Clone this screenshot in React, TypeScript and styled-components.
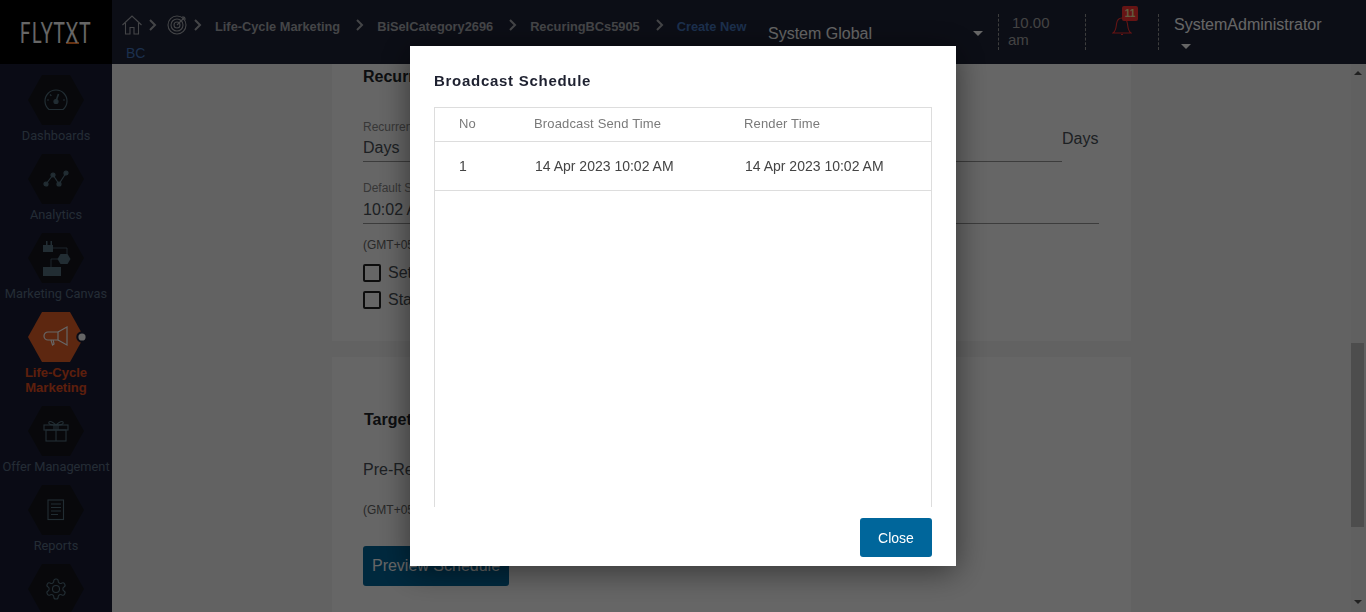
import { FC, ReactNode } from "react";
import styled, { createGlobalStyle } from "styled-components";

const GlobalStyle = createGlobalStyle`
  html, body {
    margin: 0;
    height: 100%;
    overflow: hidden;
    font-family: "Liberation Sans", Arial, sans-serif;
    color: #495057;
  }
  * { box-sizing: border-box; }
`;

const Page = styled.div`
  width: 1366px;
  height: 612px;
  display: flex;
  flex-direction: column;
  overflow: hidden;
  background: #f5f5f5;
`;

const Header = styled.header`
  height: 64px;
  flex: none;
  display: flex;
  background: #1e2337;
`;

const LogoBox = styled.div`
  width: 112px;
  flex: none;
  background: #000;
  display: flex;
  align-items: center;
  justify-content: center;
  padding-bottom: 1px;
`;

const LogoText = styled.span`
  font-family: Lato, sans-serif;
  font-weight: 400;
  font-size: 28px;
  letter-spacing: 1.5px;
  line-height: 26px;
  color: #fff;
  white-space: nowrap;
  transform: scaleX(0.68);
`;

const LogoX = styled.span`
  border-bottom: 2px solid #ff7a2a;
  display: inline-block;
  line-height: 19px;
  height: 21px;
`;

const Crumbs = styled.nav`
  width: 656px;
  flex: none;
  padding: 13px 0 0 14px;
  text-indent: -4px;
  font-size: 14px;
  line-height: 27px;
  color: #aaacb2;
`;

const CrumbIcon = styled.svg`
  display: inline-block;
  vertical-align: middle;
  fill: none;
  stroke: currentColor;
  margin-top: -4px;
`;

const Crumb = styled.span`
  font-weight: 700;
  font-size: 12.8px;
  margin-right: 15px;
`;

const CrumbCurrent = styled.span`
  font-size: 14px;
  color: #4577c0;
`;

const Strong = styled.b`
  font-weight: 700;
  font-size: 12.8px;
`;

const Arrow: FC<{ before?: number; after: number }> = ({ before = 0, after }) => (
  <CrumbIcon width="10" height="14" viewBox="0 0 10 14" strokeWidth="2" style={{ marginLeft: before, marginRight: after }}>
    <path d="M2 2l5 5-5 5" />
  </CrumbIcon>
);

const Scope = styled.div`
  width: 230px;
  flex: none;
  display: flex;
  justify-content: space-between;
  align-items: center;
  padding: 3px 15px 0 0;
  font-size: 16px;
  color: #fff;
`;

const Caret = styled.span`
  width: 0;
  height: 0;
  display: block;
  border-left: 5px solid transparent;
  border-right: 5px solid transparent;
  border-top: 5px solid #fff;
`;

const HeaderCell = styled.div<{ $width: number }>`
  width: ${(p) => p.$width}px;
  flex: none;
  height: 36px;
  margin-top: 14px;
  border-left: 1px dashed #9a9a9a;
  position: relative;
`;

const Clock = styled.div`
  font-size: 15px;
  line-height: 17px;
  color: #a8a8a8;
  padding: 0 0 0 9px;
  width: 60px;
  text-indent: 4px;
  word-spacing: 10px;
`;

const Badge = styled.span`
  position: absolute;
  left: 36px;
  top: -8px;
  width: 16px;
  height: 15px;
  border-radius: 2px;
  background: #ff3333;
  color: #f5e6a0;
  font-size: 10px;
  font-weight: 700;
  line-height: 15px;
  text-align: center;
`;

const BellIcon = styled.svg`
  position: absolute;
  left: 26px;
  top: 2px;
  fill: none;
  stroke: #ff3333;
`;

const UserName = styled.div`
  padding: 0 0 0 15px;
  margin-top: 1px;
  font-size: 16px;
  line-height: 20px;
  color: #fff;
`;

const UserCaret = styled(Caret)`
  margin: 9px 0 0 22px;
`;

const Body = styled.div`
  flex: 1;
  min-height: 0;
  display: flex;
`;

const Sidebar = styled.aside`
  width: 112px;
  flex: none;
  background: #1a1d35;
  padding-top: 11px;
  display: flex;
  flex-direction: column;
  gap: 11px;
  overflow: hidden;
`;

const NavItem = styled.div`
  display: flex;
  flex-direction: column;
  align-items: center;
  flex: none;
`;

const Hex = styled.div`
  position: relative;
  width: 56px;
  height: 50px;
  flex: none;
`;

const HexFill = styled.div<{ $active?: boolean }>`
  width: 100%;
  height: 100%;
  display: flex;
  align-items: center;
  justify-content: center;
  clip-path: polygon(25% 0, 75% 0, 100% 50%, 75% 100%, 25% 100%, 0 50%);
  background: ${(p) => (p.$active ? "#e8622a" : "#14161d")};
  color: ${(p) => (p.$active ? "#fff" : "#557080")};
`;

const ActiveDot = styled.span`
  position: absolute;
  right: -3px;
  top: 20px;
  width: 10px;
  height: 10px;
  border-radius: 50%;
  background: #fff;
  box-shadow: 0 0 0 3px #1a1d35;
  transform: scale(0.72);
`;

const NavLabel = styled.div<{ $active?: boolean }>`
  margin-top: 3px;
  font-family: ${(p) => (p.$active ? '"Liberation Sans", Arial, sans-serif' : "Roboto, sans-serif")};
  font-size: ${(p) => (p.$active ? 13 : 12.8)}px;
  line-height: 15px;
  text-align: center;
  white-space: nowrap;
  color: ${(p) => (p.$active ? "#e84f20" : "#5a6f85")};
  font-weight: ${(p) => (p.$active ? 700 : 400)};
`;

const Main = styled.main`
  flex: 1;
  min-width: 0;
  overflow: hidden;
  padding-left: 220px;
  display: flex;
  flex-direction: column;
  gap: 16px;
`;

const Card = styled.section<{ $height: number }>`
  width: 799px;
  height: ${(p) => p.$height}px;
  flex: none;
  background: #fff;
  padding-left: 31px;
`;

const CardTitle = styled.h3<{ $top: number; $left?: number }>`
  margin: ${(p) => p.$top}px 0 0 ${(p) => p.$left ?? 0}px;
  font-size: 16px;
  line-height: 18px;
  font-weight: 700;
  color: #212529;
`;

const FieldLabel = styled.div<{ $top: number }>`
  margin-top: ${(p) => p.$top}px;
  font-size: 12px;
  line-height: 14px;
  color: #8a8a8a;
`;

const FieldValue = styled.div<{ $width: number; $height: number }>`
  width: ${(p) => p.$width}px;
  height: ${(p) => p.$height}px;
  padding-top: ${(p) => p.$height - 24}px;
  font-size: 16px;
  line-height: 20px;
  border-bottom: 1px solid #969696;
  position: relative;
`;

const Suffix = styled.span`
  position: absolute;
  left: 100%;
  top: -5px;
`;

const Note = styled.div<{ $top: number }>`
  margin-top: ${(p) => p.$top}px;
  font-size: 12px;
  line-height: 14px;
  color: #666;
`;

const CheckRow = styled.label<{ $top: number }>`
  display: flex;
  align-items: center;
  gap: 7px;
  margin-top: ${(p) => p.$top}px;
  height: 18px;
  font-size: 16px;
`;

const CheckBox = styled.span`
  width: 18px;
  height: 18px;
  border: 2px solid #222;
  border-radius: 2px;
  background: #fff;
`;

const PlainText = styled.div<{ $top: number }>`
  margin-top: ${(p) => p.$top}px;
  font-size: 16px;
  line-height: 20px;
`;

const PreviewButton = styled.button`
  display: block;
  margin-top: 29px;
  width: 146px;
  height: 40px;
  padding: 0;
  border: 0;
  border-radius: 3px;
  background: #00669b;
  color: #fff;
  font: 16px "Liberation Sans", Arial, sans-serif;
`;

const Scrollbar = styled.div`
  width: 15px;
  flex: none;
  background: #f1f1f1;
  display: flex;
  flex-direction: column;
  align-items: flex-start;
  position: fixed;
  right: 0;
  top: 64px;
  bottom: 0;
`;

const ScrollUp = styled.span`
  margin: 7px 0 0 3px;
  border-left: 4px solid transparent;
  border-right: 4px solid transparent;
  border-bottom: 4px solid #505050;
`;

const ScrollThumb = styled.div`
  width: 13px;
  height: 184px;
  margin-top: 268px;
  background: #c1c1c1;
`;

const ScrollDown = styled.span`
  margin: auto 0 8px 3px;
  border-left: 4px solid transparent;
  border-right: 4px solid transparent;
  border-top: 4px solid #505050;
`;

const Overlay = styled.div`
  position: fixed;
  inset: 0;
  background: rgba(0, 0, 0, 0.6);
`;

const Modal = styled.div`
  position: fixed;
  left: 410px;
  top: 46px;
  width: 546px;
  height: 520px;
  background: #fff;
  box-shadow: 0 5px 30px rgba(0, 0, 0, 0.5);
  padding: 26px 24px 0;
  display: flex;
  flex-direction: column;
`;

const ModalTitle = styled.h2`
  margin: 0;
  height: 35px;
  font-size: 15px;
  line-height: 17px;
  font-weight: 700;
  letter-spacing: 0.72px;
  color: #1e2130;
`;

const TableFrame = styled.div`
  height: 400px;
  flex: none;
  border: 1px solid #ddd;
  border-bottom: 0;
`;

const TableRow = styled.div<{ $height: number }>`
  height: ${(p) => p.$height}px;
  display: grid;
  grid-template-columns: 75px 210px 1fr;
  align-items: center;
  padding-left: 24px;
  border-bottom: 1px solid #ddd;
`;

const HeadCell = styled.div`
  font-size: 13px;
  letter-spacing: 0.15px;
  color: #7a7a7a;
  padding-bottom: 3px;
`;

const RowCell = styled.div<{ $shift?: number }>`
  font-size: 14px;
  color: #444;
  padding-left: ${(p) => p.$shift ?? 0}px;
`;

const ModalFooter = styled.div`
  display: flex;
  justify-content: flex-end;
  padding-top: 11px;
`;

const CloseButton = styled.button`
  width: 72px;
  height: 39px;
  padding: 0;
  border: 0;
  border-radius: 3px;
  background: #00669b;
  color: #fff;
  font: 14px "Liberation Sans", Arial, sans-serif;
`;

const GaugeIcon = () => (
  <svg width="24" height="22" viewBox="0 0 24 22" fill="none" stroke="currentColor" strokeWidth="1.2">
    <path d="M5 20.500a11 11 0 1 1 14 0z" />
    <path d="M12 12l2.500-7" strokeWidth="1.6" />
    <circle cx="12" cy="12.500" r="2" fill="currentColor" />
    <path d="M3 11h2M19 11h2M6 5.500l1.400 1.400" />
  </svg>
);

const ChartIcon = () => (
  <svg width="26" height="18" viewBox="0 0 26 18" fill="currentColor" stroke="currentColor" strokeWidth="1.2">
    <path d="M3 14l7-9 6 9 7-11" fill="none" />
    <circle cx="3" cy="14" r="2" />
    <circle cx="10" cy="5" r="2" />
    <circle cx="16" cy="14" r="2" />
    <circle cx="23" cy="3" r="2" />
  </svg>
);

const CanvasIcon = () => (
  <svg width="30" height="36" viewBox="0 0 30 36" fill="currentColor">
    <path d="M2 5h3V1h1.500v4h3V1H11v4h1v7H2z" />
    <path d="M12 8h14v6" fill="none" stroke="currentColor" strokeWidth="0.8" />
    <path d="M21 14h7l3 5-3 5h-7l-3-5z" transform="translate(-1.500 0)" />
    <path d="M18 19H10v8" fill="none" stroke="currentColor" strokeWidth="0.8" />
    <rect x="2" y="27" width="18" height="9" />
  </svg>
);

const MegaphoneIcon = () => (
  <svg width="26" height="22" viewBox="0 0 26 22" fill="none" stroke="currentColor" strokeWidth="1.2">
    <path d="M15 6h-10a4 4 0 0 0 0 8h10z" />
    <path d="M15 6l9-5v18l-9-5" />
    <path d="M8 14l1.500 5 1.500-1-.8-4" />
  </svg>
);

const GiftIcon = () => (
  <svg width="26" height="22" viewBox="0 0 26 22" fill="none" stroke="currentColor" strokeWidth="1.1">
    <rect x="1" y="5" width="24" height="5" />
    <rect x="3" y="10" width="20" height="11" />
    <path d="M13 5v16M11 5v5M15 5v5" />
    <path d="M13 5C8 0 5 1 6 3.500 6.500 5 10 5 13 5zM13 5c5-5 8-4 7-1.500C19.500 5 16 5 13 5z" />
  </svg>
);

const ReportIcon = () => (
  <svg width="18" height="22" viewBox="0 0 18 22" fill="none" stroke="currentColor" strokeWidth="1.1">
    <rect x="1" y="1" width="15.500" height="19.500" />
    <path d="M4 5h10M4 8.500h10M4 12h10M4 15.500h7" />
  </svg>
);

const GearIcon = () => (
  <svg width="24" height="24" viewBox="0 0 24 24" fill="none" stroke="currentColor" strokeWidth="1.1">
    <path d="M12.220 2h-.440a2 2 0 0 0-2 2v.180a2 2 0 0 1-1 1.730l-.430.250a2 2 0 0 1-2 0l-.150-.080a2 2 0 0 0-2.730.730l-.220.380a2 2 0 0 0 .730 2.730l.150.100a2 2 0 0 1 1 1.720v.510a2 2 0 0 1-1 1.740l-.150.090a2 2 0 0 0-.730 2.730l.220.380a2 2 0 0 0 2.730.730l.150-.080a2 2 0 0 1 2 0l.430.250a2 2 0 0 1 1 1.730V20a2 2 0 0 0 2 2h.440a2 2 0 0 0 2-2v-.180a2 2 0 0 1 1-1.730l.430-.250a2 2 0 0 1 2 0l.150.080a2 2 0 0 0 2.730-.730l.220-.390a2 2 0 0 0-.730-2.730l-.150-.080a2 2 0 0 1-1-1.740v-.500a2 2 0 0 1 1-1.740l.150-.090a2 2 0 0 0 .730-2.730l-.220-.380a2 2 0 0 0-2.730-.730l-.150.080a2 2 0 0 1-2 0l-.430-.250a2 2 0 0 1-1-1.730V4a2 2 0 0 0-2-2z" />
    <circle cx="12" cy="12" r="3.500" />
  </svg>
);

type NavEntry = { label?: ReactNode; icon: ReactNode; active?: boolean };

const navEntries: NavEntry[] = [
  { label: "Dashboards", icon: <GaugeIcon /> },
  { label: "Analytics", icon: <ChartIcon /> },
  { label: "Marketing Canvas", icon: <CanvasIcon /> },
  { label: <>Life-Cycle<br />Marketing</>, icon: <MegaphoneIcon />, active: true },
  { label: "Offer Management", icon: <GiftIcon /> },
  { label: "Reports", icon: <ReportIcon /> },
  { icon: <GearIcon /> }
];

const App: FC = () => (
  <Page>
    <GlobalStyle />
    <Header>
      <LogoBox>
        <LogoText>FLYT<LogoX>X</LogoX>T</LogoText>
      </LogoBox>
      <Crumbs>
        <CrumbIcon width="20" height="20" viewBox="0 0 20 20" strokeWidth="1.1">
          <path d="M0.500 10L10 1l9.500 9M3.500 8v11h4.500v-6.500h4V19h4.500V8" />
        </CrumbIcon>
        <Arrow before={6} after={9} />
        <CrumbIcon width="20" height="20" viewBox="0 0 20 20" strokeWidth="1.1">
          <circle cx="10" cy="10" r="9" />
          <circle cx="10" cy="10" r="6" />
          <circle cx="10" cy="10" r="3" />
          <path d="M10 10l8-8M16 1v3h3" />
        </CrumbIcon>
        <Arrow before={6} after={12} />
        <Crumb>Life-Cycle Marketing</Crumb>
        <Arrow after={12} />
        <Crumb>BiSelCategory2696</Crumb>
        <Arrow after={12} />
        <Crumb>RecuringBCs5905</Crumb>
        <Arrow after={12} />
        <CrumbCurrent><Strong>Create New</Strong> BC</CrumbCurrent>
      </Crumbs>
      <Scope>
        System Global
        <Caret />
      </Scope>
      <HeaderCell $width={87}>
        <Clock>10.00 am</Clock>
      </HeaderCell>
      <HeaderCell $width={73}>
        <BellIcon width="20" height="20" viewBox="0 0 20 20" strokeWidth="1.1">
          <path d="M1 17c3-2 3-5 3.500-9C5 4 7 2 10 2s5 2 5.500 6c.5 4 .5 7 3.500 9zM9 18.500h2" />
        </BellIcon>
        <Badge>11</Badge>
      </HeaderCell>
      <HeaderCell $width={208}>
        <UserName>SystemAdministrator</UserName>
        <UserCaret />
      </HeaderCell>
    </Header>
    <Body>
      <Sidebar>
        {navEntries.map((entry, i) => (
          <NavItem key={i}>
            <Hex>
              <HexFill $active={entry.active}>{entry.icon}</HexFill>
              {entry.active && <ActiveDot />}
            </Hex>
            {entry.label && <NavLabel $active={entry.active}>{entry.label}</NavLabel>}
          </NavItem>
        ))}
      </Sidebar>
      <Main>
        <Card $height={277}>
          <CardTitle $top={4}>Recurrence Details</CardTitle>
          <FieldLabel $top={34}>Recurrence Interval</FieldLabel>
          <FieldValue $width={699} $height={28}>
            Days
            <Suffix>Days</Suffix>
          </FieldValue>
          <FieldLabel $top={19}>Default Send Time</FieldLabel>
          <FieldValue $width={736} $height={29}>10:02 AM</FieldValue>
          <Note $top={14}>(GMT+05:30) India Standard Time</Note>
          <CheckRow $top={12}><CheckBox />Set end date</CheckRow>
          <CheckRow $top={9}><CheckBox />Start immediately</CheckRow>
        </Card>
        <Card $height={300}>
          <CardTitle $top={54} $left={1}>Target Group</CardTitle>
          <PlainText $top={31}>Pre-Render Time</PlainText>
          <Note $top={23}>(GMT+05:30) India Standard Time</Note>
          <PreviewButton>Preview Schedule</PreviewButton>
        </Card>
      </Main>
      <Scrollbar>
        <ScrollUp />
        <ScrollThumb />
        <ScrollDown />
      </Scrollbar>
    </Body>
    <Overlay />
    <Modal>
      <ModalTitle>Broadcast Schedule</ModalTitle>
      <TableFrame>
        <TableRow $height={34}>
          <HeadCell>No</HeadCell>
          <HeadCell>Broadcast Send Time</HeadCell>
          <HeadCell>Render Time</HeadCell>
        </TableRow>
        <TableRow $height={49}>
          <RowCell>1</RowCell>
          <RowCell $shift={1}>14 Apr 2023 10:02 AM</RowCell>
          <RowCell $shift={1}>14 Apr 2023 10:02 AM</RowCell>
        </TableRow>
      </TableFrame>
      <ModalFooter>
        <CloseButton>Close</CloseButton>
      </ModalFooter>
    </Modal>
  </Page>
);

export default App;
